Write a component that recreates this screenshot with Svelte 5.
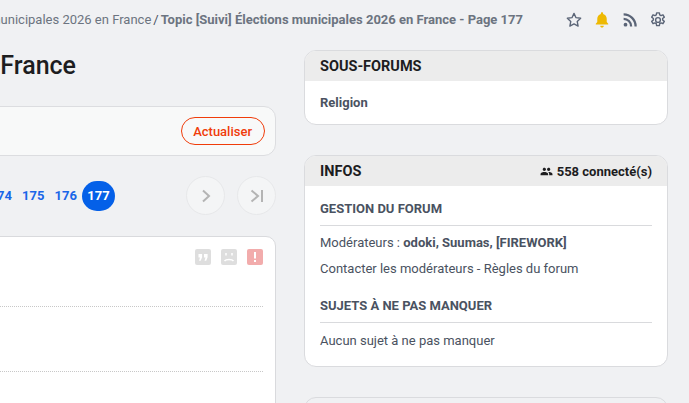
<script>
  let pages = [174, 175, 176];
</script>

<div class="page">
  <header class="topbar">
    <nav class="crumbs">
      <span>Élections municipales 2026 en France</span><span class="sep">/</span><strong>Topic [Suivi] Élections municipales 2026 en France - Page 177</strong>
    </nav>
    <div class="tools">
      <svg viewBox="0 0 24 24" width="18" height="18" fill="none" stroke="#5b6577" stroke-width="1.8" stroke-linejoin="round"><path d="M12 3.2l2.7 5.700 6.200.8-4.600 4.300 1.200 6.200L12 17.100l-5.500 3.100 1.200-6.200-4.600-4.300 6.200-.8z" /></svg>
      <svg viewBox="0 0 24 24" width="18" height="18" fill="#eeb902"><path d="M12 1.800c.9 0 1.500.6 1.500 1.500v.7c3 .7 4.800 3.300 4.800 6.400v4.400l2 2.200v1H3.700v-1l2-2.200v-4.400c0-3.100 1.800-5.700 4.800-6.400v-.7c0-.9.600-1.500 1.500-1.500zM9.600 19.600h4.800c0 1.400-1 2.500-2.400 2.500s-2.400-1.100-2.400-2.500z" /></svg>
      <svg viewBox="0 0 24 24" width="18" height="18" fill="none" stroke="#5b6577" stroke-width="3"><circle cx="6" cy="18.300" r="2.500" fill="#5b6577" stroke="none" /><path d="M3.500 10.500a10 10 0 0 1 10 10" /><path d="M3.500 4.500a16 16 0 0 1 16 16" /></svg>
      <svg viewBox="0 0 24 24" width="18" height="18" fill="none" stroke="#5b6577" stroke-width="1.900" stroke-linejoin="round"><circle cx="12" cy="12" r="3.200" /><path d="M10.200 2.500h3.600l.5 2.800 1.700.9 2.600-1.100 1.800 3.100-2.200 1.800v2l2.200 1.800-1.800 3.100-2.600-1.100-1.700.9-.5 2.800h-3.600l-.5-2.800-1.700-.9-2.600 1.100-1.800-3.100 2.200-1.800v-2L3.600 8.200l1.800-3.100 2.600 1.100 1.700-.9z" /></svg>
    </div>
  </header>

  <div class="columns">
    <main class="left">
      <h1>Topic [Suivi] Élections municipales 2026 en France</h1>

      <div class="refresh">
        <button class="refresh__btn">Actualiser</button>
      </div>

      <div class="pager">
        <div class="pager__nums">
          {#each pages as p}
            <a class="pager__num" href="#p">{p}</a>
          {/each}
          <span class="pager__current">177</span>
        </div>
        <div class="pager__nav">
          <span class="round">
            <svg viewBox="0 0 16 16" width="16" height="16" fill="none" stroke="#b4b4b4" stroke-width="2"><path d="M5 2.500l6 5.500-6 5.500" /></svg>
          </span>
          <span class="round">
            <svg viewBox="0 0 16 16" width="16" height="16" fill="none" stroke="#b4b4b4" stroke-width="2"><path d="M2.500 2.500l6.500 5.500-6.500 5.500" /><path d="M13 2v12" /></svg>
          </span>
        </div>
      </div>

      <article class="post">
        <div class="post__actions">
          <span class="act">
            <svg viewBox="0 0 16 16" width="16" height="16" fill="#fff"><path d="M3.500 5h3.600v3.200L5.700 11.700H4l1-3.200H3.500zM9 5h3.600v3.200l-1.400 3.500H9.500l1-3.200H9z" /></svg>
          </span>
          <span class="act">
            <svg viewBox="0 0 16 16" width="16" height="16" fill="none" stroke="#fff" stroke-width="1.500"><path d="M3.500 12c1.500-2 7.500-2 9 0" /><path d="M5 4v2.500M11 4v2.500" /></svg>
          </span>
          <span class="act act--alert">
            <svg viewBox="0 0 16 16" width="16" height="16" fill="#fff"><path d="M7 3h2v6.500H7zM7 11h2v2H7z" /></svg>
          </span>
        </div>
        <div class="post__row post__row--first"></div>
        <div class="post__row"></div>
      </article>
    </main>

    <aside class="side">
      <section class="panel">
        <div class="panel__head"><h2>SOUS-FORUMS</h2></div>
        <div class="panel__body panel__body--sub">
          <strong>Religion</strong>
        </div>
      </section>

      <section class="panel">
        <div class="panel__head">
          <h2>INFOS</h2>
          <span class="online">
            <svg viewBox="0 0 24 24" width="13" height="13" fill="#1d1d1f"><path d="M16 11c1.700 0 3-1.300 3-3s-1.300-3-3-3-3 1.300-3 3 1.300 3 3 3zm-8 0c1.700 0 3-1.300 3-3S9.700 5 8 5 5 6.300 5 8s1.300 3 3 3zm0 2c-2.300 0-7 1.200-7 3.500V19h14v-2.500C15 14.200 10.300 13 8 13zm8 0h-1c1.200.9 2 2 2 3.500V19h6v-2.500c0-2.300-4.700-3.500-7-3.500z" /></svg>
            558 connecté(s)
          </span>
        </div>
        <div class="panel__body">
          <h3>GESTION DU FORUM</h3>
          <p>Modérateurs : <strong>odoki, Suumas, [FIREWORK]</strong></p>
          <p>Contacter les modérateurs - Règles du forum</p>
          <h3 class="second">SUJETS À NE PAS MANQUER</h3>
          <p>Aucun sujet à ne pas manquer</p>
        </div>
      </section>

      <section class="panel panel--stub"></section>
    </aside>
  </div>
</div>

<style>
  :global(body) {
    margin: 0;
    background: #f0f1f3;
    overflow: hidden;
  }

  .page {
    width: 689px;
    height: 403px;
    overflow: hidden;
    font-family: Roboto, "Liberation Sans", sans-serif;
    color: #4a5261;
    font-size: 13px;
  }

  .topbar {
    display: flex;
    justify-content: flex-end;
    align-items: center;
    height: 40px;
    padding-right: 22px;
    white-space: nowrap;
  }

  .crumbs {
    flex-shrink: 0;
    color: #6c7480;
    font-size: 13px;
    line-height: 40px;
  }

  .crumbs strong {
    font-weight: 700;
  }

  .sep {
    margin: 0 2px;
    color: #4a5261;
  }

  .tools {
    display: flex;
    align-items: center;
    gap: 10px;
    margin-left: 42px;
    flex-shrink: 0;
  }

  .columns {
    display: flex;
    justify-content: flex-end;
    gap: 28px;
    padding-right: 21px;
    padding-top: 10px;
  }

  .left {
    flex-shrink: 0;
    width: 900px;
  }

  h1 {
    margin: 1px 0 0;
    font-size: 25px;
    line-height: 30px;
    font-weight: 500;
    color: #1d1d1f;
    white-space: nowrap;
    text-align: right;
    padding-right: 200px;
  }

  .refresh {
    display: flex;
    justify-content: flex-end;
    align-items: center;
    height: 48px;
    margin-top: 25px;
    padding-right: 10px;
    background: #f8f9f9;
    border: 1px solid #dcdde0;
    border-radius: 12px;
  }

  .refresh__btn {
    height: 28px;
    padding: 0 12px 0 11px;
    border: 1px solid #f03c0a;
    border-radius: 14px;
    background: transparent;
    color: #f03c0a;
    font: 500 13px Roboto, sans-serif;
  }

  .pager {
    display: flex;
    justify-content: flex-end;
    align-items: center;
    height: 39px;
    margin-top: 20px;
  }

  .pager__nums {
    display: flex;
    align-items: center;
    margin-right: 71px;
  }

  .pager__num {
    width: 32.500px;
    text-align: center;
    color: #1a66e8;
    font-weight: 700;
    text-decoration: none;
  }

  .pager__current {
    width: 33px;
    height: 30px;
    border-radius: 15px;
    background: #0460e8;
    color: #fff;
    font-weight: 700;
    line-height: 30px;
    text-align: center;
  }

  .pager__nav {
    display: flex;
    gap: 12px;
  }

  .round {
    display: flex;
    align-items: center;
    justify-content: center;
    width: 37px;
    height: 37px;
    border: 1px solid #e7e8ea;
    border-radius: 50%;
    background: #f4f5f6;
  }

  .post {
    margin-top: 21px;
    height: 300px;
    padding: 12px 12px 0 0;
    background: #fff;
    border: 1px solid #d9dadd;
    border-radius: 10px;
  }

  .post__actions {
    display: flex;
    justify-content: flex-end;
    gap: 10px;
    height: 16px;
  }

  .act {
    display: block;
    width: 16px;
    height: 16px;
    border-radius: 2px;
    background: #dedede;
  }

  .act svg {
    display: block;
  }

  .act--alert {
    background: #f2acac;
  }

  .post__row {
    height: 64px;
    border-bottom: 1px dotted #c8c8c8;
  }

  .post__row--first {
    height: 41px;
  }

  .side {
    flex-shrink: 0;
    width: 364px;
    display: flex;
    flex-direction: column;
    gap: 30px;
  }

  .panel {
    background: #fff;
    border: 1px solid #dadbde;
    border-radius: 12px;
    overflow: hidden;
  }

  .panel--stub {
    height: 40px;
    background: #f0f1f3;
  }

  .panel__head {
    display: flex;
    justify-content: space-between;
    align-items: center;
    height: 30px;
    padding: 0 15px;
    background: #ececec;
    color: #1d1d1f;
  }

  h2 {
    margin: 0;
    font-size: 14.500px;
    font-weight: 700;
  }

  .online {
    display: flex;
    align-items: center;
    gap: 4px;
    font-weight: 700;
  }

  .panel__body {
    padding: 15px 15px 18px;
  }

  .panel__body--sub {
    padding: 14px 15px 14px;
    line-height: 15px;
  }

  .panel__body strong {
    font-weight: 700;
  }

  h3 {
    margin: 0 0 9px;
    padding-bottom: 9px;
    border-bottom: 1px solid #d9dadd;
    font-size: 13px;
    line-height: 15px;
    font-weight: 700;
  }

  h3.second {
    margin-top: 22px;
    margin-bottom: 10px;
  }

  p {
    margin: 0 0 11px;
    line-height: 15px;
  }

  p:last-child {
    margin-bottom: 0;
  }
</style>
